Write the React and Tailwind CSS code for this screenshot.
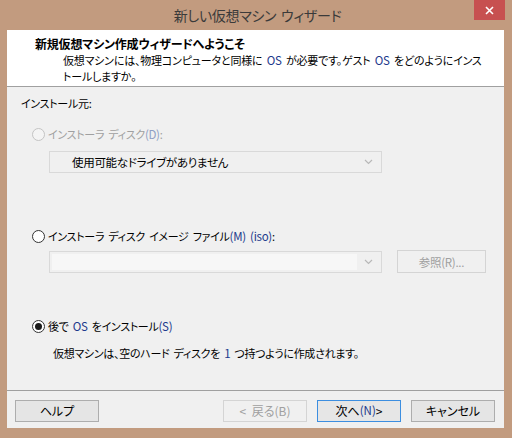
import React, { useState } from "react";

const Radio = ({ checked, disabled }) => {
  return (
    <span
      className={`w-[13px] h-[13px] rounded-full border flex items-center justify-center shrink-0 ${
        disabled ? "border-[#c4c4c4] bg-[#f4f4f4]" : "border-[#333333] bg-white"
      }`}
    >
      {checked && <span className="w-[7px] h-[7px] rounded-full bg-[#1a1a1a]" />}
    </span>
  );
};

const Chevron = () => (
  <svg width="9" height="6" viewBox="0 0 9 6" className="shrink-0">
    <path d="M1 1 L4.5 4.5 L8 1" fill="none" stroke="#b8b8b8" strokeWidth="1.2" />
  </svg>
);

const Button = ({ children, disabled, primary }) => (
  <button
    className={`w-[84px] h-[22px] border flex items-center justify-center text-[12px] [word-spacing:3px] ${
      primary
        ? "border-[#3c8ee0] bg-[#e6e6e6] text-black"
        : disabled
        ? "border-[#d4d4d4] bg-[#f0f0f0] text-[#a0a0a0]"
        : "border-[#adadad] bg-[#e5e5e5] text-black"
    }`}
  >
    {children}
  </button>
);

const Lat = ({ children, dim }) => (
  <span className={`text-[11.5px] ${dim ? "text-[#8f9fc4]" : "text-[#1c3a8c]"}`}>{children}</span>
);

const App = () => {
  const [choice, setChoice] = useState("later");

  return (
    <div
      className="w-[512px] h-[438px] bg-[#c29b7f] flex flex-col relative overflow-hidden [font-feature-settings:'palt'] [word-spacing:2px]"
      style={{ fontFamily: '"Noto Sans CJK JP", "Noto Sans", sans-serif' }}
    >
      {/* TITLE BAR */}

      <div className="h-[30px] flex items-center justify-center text-[14px] tracking-[-0.3px] text-[#3a3a3a] shrink-0 pl-[3px]">
        新しい仮想マシン ウィザード
      </div>

      <button className="absolute top-0 right-[7px] w-[31px] h-[20px] bg-[#c75050] flex items-center justify-center">
        <svg width="9" height="9" viewBox="0 0 9 9">
          <path d="M1 1 L8 8 M8 1 L1 8" stroke="white" strokeWidth="1.6" />
        </svg>
      </button>

      {/* CONTENT */}

      <div className="flex-1 ml-[7px] mr-[8px] mb-[10px] flex flex-col bg-[#f0f0f0]">

        <header className="h-[57px] bg-white border-b border-[#a0a0a0] pl-[28px] pt-[6px] shrink-0">
          <div className="text-[12px] font-bold leading-[16px] tracking-[-0.2px] text-black">
            新規仮想マシン作成ウィザードへようこそ
          </div>
          <div className="pl-[28px] text-[11px] tracking-[-0.2px] leading-[16px] text-black whitespace-nowrap">
            仮想マシンには、物理コンピュータと同様に <Lat>OS</Lat> が必要です。ゲスト <Lat>OS</Lat> をどのようにインス
            <br />
            トールしますか。
          </div>
        </header>

        <div className="flex-1 flex flex-col text-[11px] tracking-[-0.3px] leading-[16px] text-black">

          <div className="pl-[14px] mt-[8px]">インストール元:</div>

          <label className="flex items-center gap-[3px] pl-[25px] mt-[15px] text-[#a0a0a0]">
            <Radio disabled />
            <span>
              インストーラ ディスク<Lat dim>(D)</Lat>:
            </span>
          </label>

          <div className="ml-[42px] mt-[9px] w-[333px] h-[22px] border border-[#d9d9d9] bg-[#f0f0f0] flex items-center justify-between pl-[22px] pr-[8px]">
            <span className="text-[11.5px]">使用可能なドライブがありません</span>
            <Chevron />
          </div>

          <label
            className="flex items-center gap-[3px] pl-[25px] mt-[55px]"
            onClick={() => setChoice("iso")}
          >
            <Radio checked={choice === "iso"} />
            <span>
              インストーラ ディスク イメージ ファイル<Lat>(M) (iso)</Lat>:
            </span>
          </label>

          <div className="flex items-center mt-[7px]">
            <div className="ml-[42px] w-[333px] h-[22px] border border-[#d9d9d9] bg-[#f0f0f0] flex items-center p-[2px] pr-[8px]">
              <div className="flex-1 h-full bg-[#f7f7f7]" />
              <div className="ml-[7px]">
                <Chevron />
              </div>
            </div>
            <button className="ml-[15px] w-[89px] h-[23px] -mt-[1px] border border-[#d4d4d4] bg-[#f0f0f0] text-[#a0a0a0] text-[11.5px] flex items-center justify-center">
              参照(R)...
            </button>
          </div>

          <label
            className="flex items-center gap-[3px] pl-[25px] mt-[45px]"
            onClick={() => setChoice("later")}
          >
            <Radio checked={choice === "later"} />
            <span>
              後で <Lat>OS</Lat> をインストール<Lat>(S)</Lat>
            </span>
          </label>

          <div className="pl-[46px] mt-[11px]">
            仮想マシンは、空のハード ディスクを <Lat>1</Lat> つ持つように作成されます。
          </div>

        </div>

        {/* FOOTER */}

        <footer className="h-[38px] border-t border-[#a0a0a0] flex items-start pt-[9px] pl-[8px] pr-[9px] shrink-0">
          <Button>ヘルプ</Button>
          <div className="flex-1" />
          <div className="flex gap-[10px]">
            <Button disabled>&lt; 戻る(B)</Button>
            <Button primary>
              次へ<Lat>(N)</Lat> &gt;
            </Button>
            <Button>キャンセル</Button>
          </div>
        </footer>

      </div>
    </div>
  );
};

export default App;
